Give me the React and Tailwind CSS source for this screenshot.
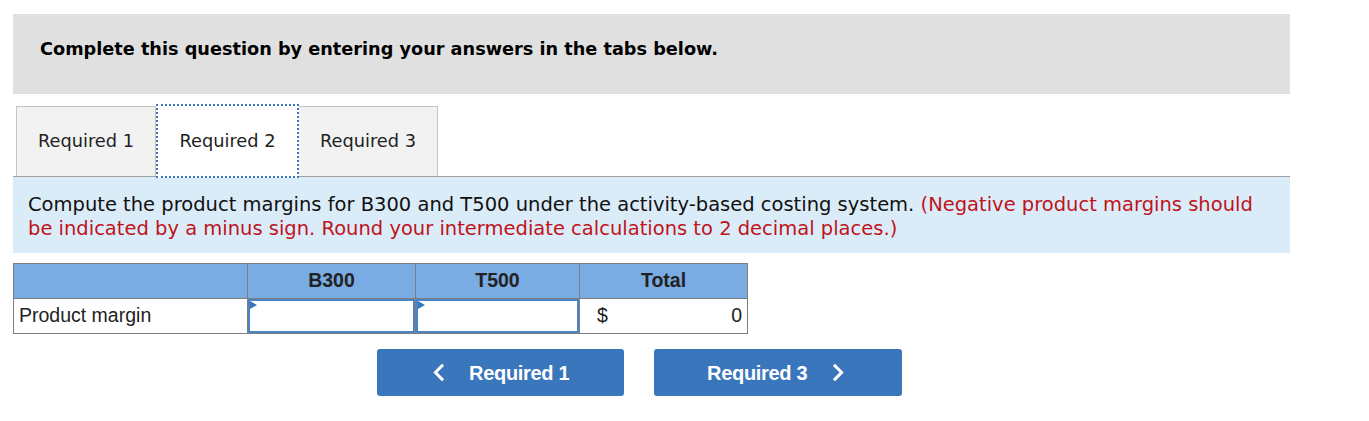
import React from 'react';

const verdana = { fontFamily: '"DejaVu Sans", Verdana, sans-serif' };

function Chevron({ dir }) {
  return (
    <svg width="11" height="17" viewBox="0 0 11 17" fill="none">
      <path
        d={dir === 'left' ? 'M9 1.8 L2.4 8.5 L9 15.2' : 'M2 1.8 L8.6 8.5 L2 15.2'}
        stroke="white"
        strokeWidth="3"
        strokeLinecap="square"
      />
    </svg>
  );
}

function AnswerInput() {
  return (
    <div className="relative h-full w-full border-2 border-[#4d82c3] bg-white">
      <div className="absolute left-0 top-0 h-0 w-0 border-y-[4px] border-l-[7px] border-y-transparent border-l-[#3a76bb]" />
    </div>
  );
}

export default function App() {
  return (
    <div className="h-[421px] w-[1369px] bg-white pl-[13px] pt-[14px]">
      <div
        className="flex h-[80px] w-[1277px] items-center bg-[#e0e0e0] pl-[27px] pb-[10px] text-[17.7px] font-bold text-black"
        style={verdana}
      >
        Complete this question by entering your answers in the tabs below.
      </div>

      <div className="mt-[12px] flex pl-[3px]" style={verdana}>
        <div className="flex h-[70px] w-[140px] items-center justify-center border border-b-0 border-[#c4c4c4] bg-[#f2f2f2] text-[17.8px] text-[#222]">
          Required 1
        </div>
        <div className="relative z-10 -my-[2px] flex h-[74px] w-[143px] items-center justify-center border-2 border-dotted border-[#3a76bb] bg-white text-[17.8px] text-[#222]">
          Required 2
        </div>
        <div className="flex h-[70px] w-[139px] items-center justify-center border border-b-0 border-l-0 border-[#c4c4c4] bg-[#f2f2f2] text-[17.8px] text-[#222]">
          Required 3
        </div>
      </div>

      <div
        className="w-[1277px] border-t border-[#a0a0a0] bg-[#dbecf9] px-[15px] pb-[12px] pt-[16px] text-[19.5px] leading-[24px] text-[#111]"
        style={verdana}
      >
        Compute the product margins for B300 and T500 under the activity-based costing system.{' '}
        <span className="text-[#c0131b]">
          (Negative product margins should be indicated by a minus sign. Round your intermediate calculations to 2 decimal places.)
        </span>
      </div>

      <table
        className="mt-[10px] w-[735px] border-collapse text-[19.5px] text-[#222]"
        style={{ fontFamily: '"Liberation Sans", Arial, sans-serif' }}
      >
        <thead>
          <tr className="h-[35px] bg-[#78ace3]">
            <th className="w-[234px] border border-[#7f7f7f]"></th>
            <th className="w-[168px] border border-[#7f7f7f] font-bold">B300</th>
            <th className="w-[164px] border border-[#7f7f7f] font-bold">T500</th>
            <th className="w-[168px] border border-[#7f7f7f] font-bold">Total</th>
          </tr>
        </thead>
        <tbody>
          <tr className="h-[35px]">
            <td className="border border-[#7f7f7f] px-[5px] text-left">Product margin</td>
            <td className="h-[35px] border border-[#7f7f7f] p-0">
              <AnswerInput />
            </td>
            <td className="h-[35px] border border-[#7f7f7f] p-0">
              <AnswerInput />
            </td>
            <td className="border border-[#7f7f7f] px-[5px]">
              <div className="flex items-center justify-between pl-[12px]">
                <span>$</span>
                <span>0</span>
              </div>
            </td>
          </tr>
        </tbody>
      </table>

      <div
        className="mt-[15px] flex gap-[30px] pl-[364px]"
        style={{ fontFamily: '"Liberation Sans", Arial, sans-serif' }}
      >
        <button className="flex h-[47px] w-[247px] items-center gap-[25px] rounded-[3px] bg-[#3a76bb] pl-[56px] text-[20px] font-bold tracking-[-0.3px] text-white">
          <Chevron dir="left" />
          <span>Required 1</span>
        </button>
        <button className="flex h-[47px] w-[248px] items-center gap-[26px] rounded-[3px] bg-[#3a76bb] pl-[53px] text-[20px] font-bold tracking-[-0.3px] text-white">
          <span>Required 3</span>
          <Chevron dir="right" />
        </button>
      </div>
    </div>
  );
}
